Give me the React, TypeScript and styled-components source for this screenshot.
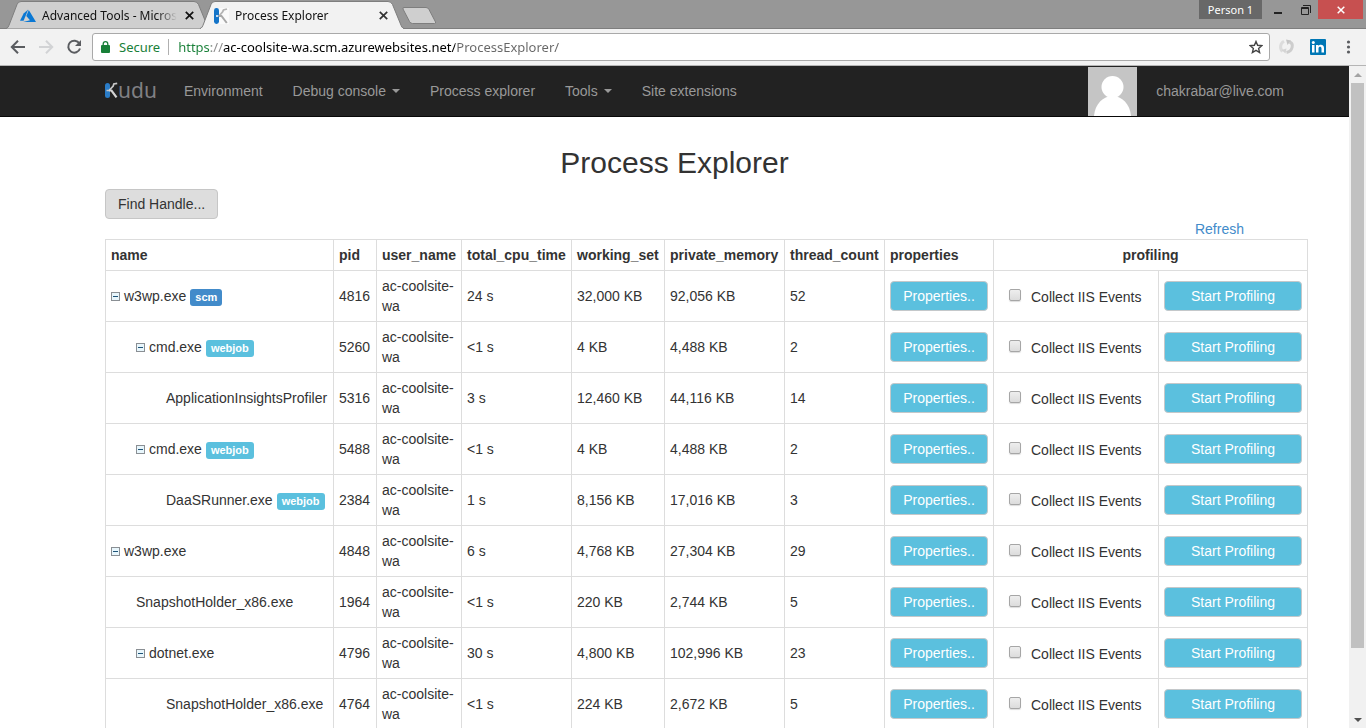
import React, { useState } from 'react';
import styled, { createGlobalStyle } from 'styled-components';

const GlobalStyle = createGlobalStyle`
  *, *::before, *::after { box-sizing: border-box; }
  body {
    margin: 0;
    background: #fff;
    color: #333;
    font: 14px/20px "Liberation Sans", Arial, sans-serif;
  }
  button, input { font: inherit; }
`;

const Window = styled.div`
  display: flex;
  flex-direction: column;
  height: 100vh;
  overflow: hidden;
`;

/* ---------- browser frame ---------- */

const TitleBar = styled.div`
  display: flex;
  align-items: flex-start;
  flex: none;
  height: 29px;
  padding-left: 6px;
  background: #979797;
  border-bottom: 1px solid #7e7e7e;
  font: 12px/16px "Noto Sans", "Open Sans", sans-serif;
`;

const PlainButton = styled.button`
  display: flex;
  align-items: center;
  justify-content: center;
  padding: 0;
  border: 0;
  background: none;
  color: inherit;
`;

const Tab = styled.div<{ $active?: boolean }>`
  position: relative;
  z-index: ${p => (p.$active ? 2 : 1)};
  display: flex;
  align-items: center;
  flex: none;
  gap: 6px;
  width: 204px;
  height: 29px;
  padding: 2px 15px 0 14px;
  color: #111;
  & + & { margin-left: -10px; }
`;

const TabShape = styled.svg`
  position: absolute;
  inset: 0;
  z-index: -1;
`;

const TabTitle = styled.button`
  flex: 1;
  min-width: 0;
  padding: 0;
  border: 0;
  background: none;
  color: inherit;
  text-align: left;
  white-space: nowrap;
  overflow: hidden;
  mask-image: linear-gradient(to right, #000 calc(100% - 20px), transparent);
`;

const TabClose = styled(PlainButton)`
  width: 12px;
  height: 16px;
`;

const NewTab = styled(PlainButton)`
  margin: 6px 0 0 -3px;
`;

const WindowControls = styled.div`
  display: flex;
  margin-left: auto;
  padding-right: 3px;
`;

const Person = styled(PlainButton)`
  width: 63px;
  height: 19px;
  background: #686868;
  color: #fff;
  font-size: 11px;
`;

const WindowButton = styled(PlainButton)<{ $width: number; $danger?: boolean }>`
  width: ${p => p.$width}px;
  height: 19px;
  background: ${p => (p.$danger ? '#c75050' : 'none')};
`;

const Toolbar = styled.div`
  display: flex;
  align-items: center;
  flex: none;
  height: 37px;
  padding: 0 8px 1px 8px;
  background: #f2f2f2;
  border-bottom: 1px solid #b5b5b5;
  font: 13px/18px "Noto Sans", "Open Sans", sans-serif;
`;

const ToolButton = styled(PlainButton)`
  width: 20px;
  height: 24px;
  margin-right: 8px;
`;

const AddressBar = styled.div`
  display: flex;
  align-items: center;
  flex: 1;
  height: 28px;
  padding: 0 6px 0 8px;
  background: #fff;
  border: 1px solid #a9a9a9;
  border-radius: 3px;
`;

const Secure = styled.span`
  margin-left: 9px;
  padding-right: 8px;
  border-right: 1px solid #b0b0b0;
  color: #188038;
  line-height: 16px;
`;

const Url = styled.input`
  flex: 1;
  min-width: 0;
  height: 20px;
  margin-left: 9px;
  padding: 0;
  border: 0;
  outline: 0;
  color: transparent;
  caret-color: #000;
  background: linear-gradient(to right, #188038 0 33px, #888 33px 45px, #000 45px 277px, #666 277px);
  -webkit-background-clip: text;
  background-clip: text;
`;

const Extensions = styled.div`
  display: flex;
  align-items: center;
  gap: 14px;
  margin-left: 8px;
`;

const Viewport = styled.div`
  display: flex;
  flex: 1;
  min-height: 0;
`;

const Page = styled.div`
  flex: 1;
  min-width: 0;
  overflow: hidden;
`;

const ScrollTrack = styled.div`
  display: flex;
  flex-direction: column;
  flex: none;
  width: 17px;
  padding-left: 2px;
  padding-right: 2px;
  background: #f1f1f1;
`;

const ScrollArrow = styled(PlainButton)`
  flex: none;
  height: 17px;
`;

const ScrollRun = styled.div`
  flex: 1;
`;

const ScrollThumb = styled.div`
  height: 90%;
  background: #c1c1c1;
`;

/* ---------- site ---------- */

const Navbar = styled.nav`
  background: #222;
  border-bottom: 1px solid #080808;
`;

const Container = styled.div`
  width: 100%;
  max-width: 1139px;
  margin: 0 auto;
`;

const NavRow = styled(Container)`
  display: flex;
  align-items: center;
  height: 50px;
`;

const Brand = styled.a`
  display: flex;
  align-items: center;
  flex: none;
  width: 64px;
  padding-bottom: 2px;
  color: #808084;
  font: 400 21px/24px "Noto Sans", "Open Sans", sans-serif;
  text-decoration: none;
`;

const NavLink = styled.a`
  display: flex;
  align-items: center;
  padding: 0 15px;
  color: #999;
  text-decoration: none;
  white-space: nowrap;
`;

const Caret = styled.span`
  margin-left: 6px;
  border: 4px solid transparent;
  border-top-color: currentColor;
  border-bottom: 0;
`;

const User = styled.div`
  display: flex;
  align-items: center;
  gap: 19px;
  margin-left: auto;
  margin-right: -40px;
  color: #999;
`;

const Avatar = styled.svg`
  display: block;
  margin-top: 1px;
`;

const Heading = styled.h1`
  margin: 29px 0 10px;
  font-size: 30px;
  line-height: 33px;
  font-weight: 400;
  text-align: center;
`;

const Button = styled.button<{ $info?: boolean; $block?: boolean }>`
  display: block;
  width: ${p => (p.$block ? '100%' : 'auto')};
  height: 30px;
  padding: 0 12px;
  border: 1px solid ${p => (p.$info ? '#c4c8ca' : '#c6c6c6')};
  border-radius: 4px;
  background: ${p => (p.$info ? '#5bc0de' : '#ddd')};
  color: ${p => (p.$info ? '#fff' : '#333')};
  white-space: nowrap;
`;

const RefreshRow = styled.div`
  text-align: right;
  a { color: #428bca; text-decoration: none; }
`;

const Table = styled.table`
  width: 1203px;
  table-layout: fixed;
  border-collapse: collapse;
  th, td {
    padding: 5px;
    border: 1px solid #ddd;
    text-align: left;
    vertical-align: middle;
  }
  th:last-child { text-align: center; }
`;

const Name = styled.div<{ $indent: number }>`
  display: flex;
  align-items: center;
  padding-left: ${p => p.$indent}px;
  white-space: nowrap;
`;

const Toggle = styled(PlainButton)`
  margin-right: 4px;
`;

const Badge = styled.span<{ $kind: 'scm' | 'webjob' }>`
  margin: 2px 0 0 4px;
  padding: 0 5px;
  border-radius: 3px;
  background: ${p => (p.$kind === 'scm' ? '#428bca' : '#5bc0de')};
  color: #fff;
  font-size: 11px;
  font-weight: 700;
  line-height: 17px;
`;

const Collect = styled.label`
  display: flex;
  align-items: center;
  gap: 10px;
  padding: 2px 0 0 10px;
  white-space: nowrap;
`;

const Checkbox = styled.input`
  appearance: none;
  width: 12px;
  height: 12px;
  margin: 0 0 4px;
  border: 1px solid #a6a6a6;
  border-radius: 2px;
  background: linear-gradient(#eee, #dcdcdc);
  box-shadow: 0 1px 1px #ddd;
  &:checked { background: #666; }
`;

type Process = {
  name: string; depth: number; parent?: boolean; badge?: 'scm' | 'webjob';
  pid: number; cpu: string; set: string; memory: string; threads: number;
};

const processes: Process[] = [
  { name: 'w3wp.exe', depth: 0, parent: true, badge: 'scm', pid: 4816, cpu: '24 s', set: '32,000 KB', memory: '92,056 KB', threads: 52 },
  { name: 'cmd.exe', depth: 1, parent: true, badge: 'webjob', pid: 5260, cpu: '<1 s', set: '4 KB', memory: '4,488 KB', threads: 2 },
  { name: 'ApplicationInsightsProfiler', depth: 2, pid: 5316, cpu: '3 s', set: '12,460 KB', memory: '44,116 KB', threads: 14 },
  { name: 'cmd.exe', depth: 1, parent: true, badge: 'webjob', pid: 5488, cpu: '<1 s', set: '4 KB', memory: '4,488 KB', threads: 2 },
  { name: 'DaaSRunner.exe', depth: 2, badge: 'webjob', pid: 2384, cpu: '1 s', set: '8,156 KB', memory: '17,016 KB', threads: 3 },
  { name: 'w3wp.exe', depth: 0, parent: true, pid: 4848, cpu: '6 s', set: '4,768 KB', memory: '27,304 KB', threads: 29 },
  { name: 'SnapshotHolder_x86.exe', depth: 1, pid: 1964, cpu: '<1 s', set: '220 KB', memory: '2,744 KB', threads: 5 },
  { name: 'dotnet.exe', depth: 1, parent: true, pid: 4796, cpu: '30 s', set: '4,800 KB', memory: '102,996 KB', threads: 23 },
  { name: 'SnapshotHolder_x86.exe', depth: 2, pid: 4764, cpu: '<1 s', set: '224 KB', memory: '2,672 KB', threads: 5 },
];

const indents = [0, 25, 55];
const columnWidths = [228, 43, 85, 110, 93, 120, 100, 109, 165, 149];
const columns = ['name', 'pid', 'user_name', 'total_cpu_time', 'working_set', 'private_memory', 'thread_count', 'properties'];

const CloseGlyph = ({ color = '#333', size = 9 }: { color?: string; size?: number }) => (
  <svg width={size} height={size} viewBox="0 0 8 8" aria-hidden="true">
    <path d="M.7.7l6.6 6.6M7.3.7L.7 7.3" stroke={color} strokeWidth="1.5" />
  </svg>
);

const TabBackground = ({ active }: { active?: boolean }) => (
  <TabShape width="204" height="29" viewBox="0 0 204 29" aria-hidden="true">
    <path
      d="M0 28.5C2 28 2.500 26.500 3.500 24L11 4.500Q12 1.500 15 1.500H188Q191 1.500 192.500 4.500L200.500 24C201.500 26.500 202 28 204 28.500"
      fill={active ? '#f2f2f2' : '#cfcfcf'}
      stroke="#7e7e7e"
    />
    {active && <path d="M1 28.500H203" stroke="#f2f2f2" />}
  </TabShape>
);

const AzureIcon = () => (
  <svg width="16" height="14" viewBox="0 0 16 14" aria-hidden="true">
    <path d="M8.200 .5L3.600 4.400 0 11.800h3.600z" fill="#0a78d4" />
    <path d="M8.800 1L6.300 7l3.700 4.300-6.800 1.700H16z" fill="#0a78d4" />
  </svg>
);

const KuduIcon = () => (
  <svg width="15" height="16" viewBox="0 0 15 16" aria-hidden="true">
    <rect width="15" height="16" fill="#fafafa" />
    <rect x="0" width="5" height="16" rx="2.400" fill="#1474c8" />
    <path d="M5 8L8.500 4l1-2L13 1" fill="none" stroke="#b4b4b4" strokeWidth="1.800" />
    <path d="M4.500 8H7.500L12.800 15" fill="none" stroke="#a8a8a8" strokeWidth="2" />
    <circle cx="3" cy="8" r="1" fill="#fff" />
  </svg>
);

const BrandMark = () => (
  <svg width="13" height="17" viewBox="0 0 13 17" aria-hidden="true">
    <rect y="1" width="5" height="15" rx="2.500" fill="#2a7cc7" />
    <path d="M1.500 8.500H4L8.200 4l.6-2 3.400-.6" fill="none" stroke="#c8c8c8" strokeWidth="1.700" />
    <path d="M4 8.500h2.500l5 6.800" fill="none" stroke="#d4d4d4" strokeWidth="2.200" />
  </svg>
);

const ToggleIcon = () => (
  <svg width="9" height="9" viewBox="0 0 9 9" shapeRendering="crispEdges" aria-hidden="true">
    <rect x=".5" y=".5" width="8" height="8" fill="#e8f6fc" stroke="#8a8f94" />
    <path d="M2 4.500h5" stroke="#1d5378" />
  </svg>
);

function ProcessRow({ process }: { process: Process }) {
  return (
    <tr>
      <td>
        <Name $indent={indents[process.depth]}>
          {process.parent && <Toggle aria-label="Collapse"><ToggleIcon /></Toggle>}
          {process.name}
          {process.badge && <Badge $kind={process.badge}>{process.badge}</Badge>}
        </Name>
      </td>
      <td>{process.pid}</td>
      <td>ac-coolsite-wa</td>
      <td>{process.cpu}</td>
      <td>{process.set}</td>
      <td>{process.memory}</td>
      <td>{process.threads}</td>
      <td><Button $info $block>Properties..</Button></td>
      <td><Collect><Checkbox type="checkbox" />Collect IIS Events</Collect></td>
      <td><Button $info $block>Start Profiling</Button></td>
    </tr>
  );
}

export default function App() {
  const [url, setUrl] = useState('https://ac-coolsite-wa.scm.azurewebsites.net/ProcessExplorer/');
  return (
    <Window>
      <GlobalStyle />
      <TitleBar>
        <Tab>
          <TabBackground />
          <AzureIcon />
          <TabTitle>Advanced Tools - Microsoft Azure</TabTitle>
          <TabClose aria-label="Close tab"><CloseGlyph color="#111" /></TabClose>
        </Tab>
        <Tab $active>
          <TabBackground active />
          <KuduIcon />
          <TabTitle>Process Explorer</TabTitle>
          <TabClose aria-label="Close tab"><CloseGlyph /></TabClose>
        </Tab>
        <NewTab aria-label="New tab">
          <svg width="38" height="19" viewBox="0 0 38 19" aria-hidden="true">
            <path d="M3 1.500H25Q27 1.500 28 3.500L34.500 16Q35 17.500 33.500 17.500H11.500Q9.500 17.500 8.500 15.500L2 3Q1.500 1.500 3 1.500Z" fill="#cfcfcf" stroke="#7e7e7e" />
          </svg>
        </NewTab>
        <WindowControls>
          <Person>Person 1</Person>
          <WindowButton $width={31} aria-label="Minimize">
            <svg width="8" height="11" viewBox="0 0 8 11" aria-hidden="true"><path d="M0 9h8" stroke="#222" strokeWidth="2" /></svg>
          </WindowButton>
          <WindowButton $width={25} aria-label="Restore">
            <svg width="10" height="10" viewBox="0 0 10 10" aria-hidden="true">
              <path d="M.5 2.500h7v7h-7zM.5 3.500h7M2 .5h7.500V8" fill="none" stroke="#222" />
            </svg>
          </WindowButton>
          <WindowButton $width={45} $danger aria-label="Close window"><CloseGlyph color="#fff" size={8} /></WindowButton>
        </WindowControls>
      </TitleBar>
      <Toolbar>
        <ToolButton aria-label="Back">
          <svg width="16" height="16" viewBox="0 0 16 16" fill="none" stroke="#5a5c60" strokeWidth="2" aria-hidden="true"><path d="M15 8H2.500M8 1.800L1.800 8 8 14.200" /></svg>
        </ToolButton>
        <ToolButton aria-label="Forward">
          <svg width="16" height="16" viewBox="0 0 16 16" fill="none" stroke="#d2d3d5" strokeWidth="2" aria-hidden="true"><path d="M1 8h12.500M8 1.800L14.200 8 8 14.200" /></svg>
        </ToolButton>
        <ToolButton aria-label="Reload">
          <svg width="16" height="16" viewBox="0 0 16 16" fill="none" aria-hidden="true">
            <path d="M13.400 4.500A6 6 0 1 0 14 9.500" stroke="#5a5c60" strokeWidth="2" />
            <path d="M15 1v6H9z" fill="#5a5c60" />
          </svg>
        </ToolButton>
        <AddressBar>
          <svg width="9" height="12" viewBox="0 0 9 12" aria-hidden="true">
            <rect y="4" width="9" height="8" rx="1" fill="#188038" />
            <path d="M2.200 5V3a2.300 2.300 0 0 1 4.600 0v2" fill="none" stroke="#188038" strokeWidth="1.300" />
          </svg>
          <Secure>Secure</Secure>
          <Url aria-label="Address" value={url} spellCheck={false} onChange={e => setUrl(e.target.value)} />
          <PlainButton aria-label="Bookmark this page">
            <svg width="14" height="14" viewBox="0 0 14 14" aria-hidden="true">
              <path d="M7 1.500l1.600 3.800 4.200.4-3.200 2.700 1 4.100L7 10.300l-3.600 2.200 1-4.100L1.200 5.700l4.200-.4z" fill="none" stroke="#444" strokeWidth="1.400" />
            </svg>
          </PlainButton>
        </AddressBar>
        <Extensions>
          <PlainButton aria-label="Extension">
            <svg width="18" height="18" viewBox="0 0 18 18" fill="none" aria-hidden="true">
              <path d="M4.500 13.500C1.500 10.500 2 5.500 6 3.300" stroke="#dcdcdc" strokeWidth="3" />
              <path d="M11.500 4C16 5.500 15 13 8.500 14.500" stroke="#cdcdcd" strokeWidth="3" />
              <path d="M8 1.500l5 1-3.500 4.500z" fill="#c4c4c4" />
              <path d="M3.500 12l5-1.500-1 5z" fill="#d4d4d4" />
            </svg>
          </PlainButton>
          <PlainButton aria-label="LinkedIn">
            <svg width="16" height="16" viewBox="0 0 16 16" aria-hidden="true">
              <rect width="16" height="16" rx="1" fill="#0077b5" />
              <path d="M2 6h2.500v7.500H2zM6 6h2.400v1C9.500 5.200 14 5 14 9v4.500h-2.500V9.500c0-2.300-3-2.200-3 0v4H6z" fill="#fff" />
              <circle cx="3.300" cy="3.500" r="1.500" fill="#fff" />
            </svg>
          </PlainButton>
          <PlainButton aria-label="Menu">
            <svg width="18" height="16" viewBox="0 0 18 16" fill="#5a5c60" aria-hidden="true">
              <circle cx="8.500" cy="3" r="1.600" /><circle cx="8.500" cy="8" r="1.600" /><circle cx="8.500" cy="13" r="1.600" />
            </svg>
          </PlainButton>
        </Extensions>
      </Toolbar>
      <Viewport>
        <Page>
          <Navbar>
            <NavRow>
              <Brand href="#" aria-label="Kudu"><BrandMark />udu</Brand>
              <NavLink href="#">Environment</NavLink>
              <NavLink href="#">Debug console<Caret /></NavLink>
              <NavLink href="#">Process explorer</NavLink>
              <NavLink href="#">Tools<Caret /></NavLink>
              <NavLink href="#">Site extensions</NavLink>
              <User>
                <Avatar width="49" height="49" viewBox="0 0 49 49" aria-hidden="true">
                  <rect width="49" height="49" fill="#c5c5c5" />
                  <circle cx="24.500" cy="20" r="11" fill="#fff" />
                  <path d="M6 49C7 37 15 29 24.500 29S42 37 43 49z" fill="#fff" />
                </Avatar>
                chakrabar@live.com
              </User>
            </NavRow>
          </Navbar>
          <Container as="main">
            <Heading>Process Explorer</Heading>
            <Button>Find Handle...</Button>
            <RefreshRow><a href="#">Refresh</a></RefreshRow>
            <Table>
              <colgroup>
                {columnWidths.map((width, i) => <col key={i} width={width} />)}
              </colgroup>
              <thead>
                <tr>
                  {columns.map(column => <th key={column}>{column}</th>)}
                  <th colSpan={2}>profiling</th>
                </tr>
              </thead>
              <tbody>
                {processes.map(process => <ProcessRow key={process.pid} process={process} />)}
              </tbody>
            </Table>
          </Container>
        </Page>
        <ScrollTrack>
          <ScrollArrow aria-label="Scroll up">
            <svg width="8" height="4" viewBox="0 0 8 4" aria-hidden="true"><path d="M4 0l4 4H0z" fill="#a3a3a3" /></svg>
          </ScrollArrow>
          <ScrollRun><ScrollThumb /></ScrollRun>
          <ScrollArrow aria-label="Scroll down">
            <svg width="8" height="4" viewBox="0 0 8 4" aria-hidden="true"><path d="M4 4l4-4H0z" fill="#505050" /></svg>
          </ScrollArrow>
        </ScrollTrack>
      </Viewport>
    </Window>
  );
}
